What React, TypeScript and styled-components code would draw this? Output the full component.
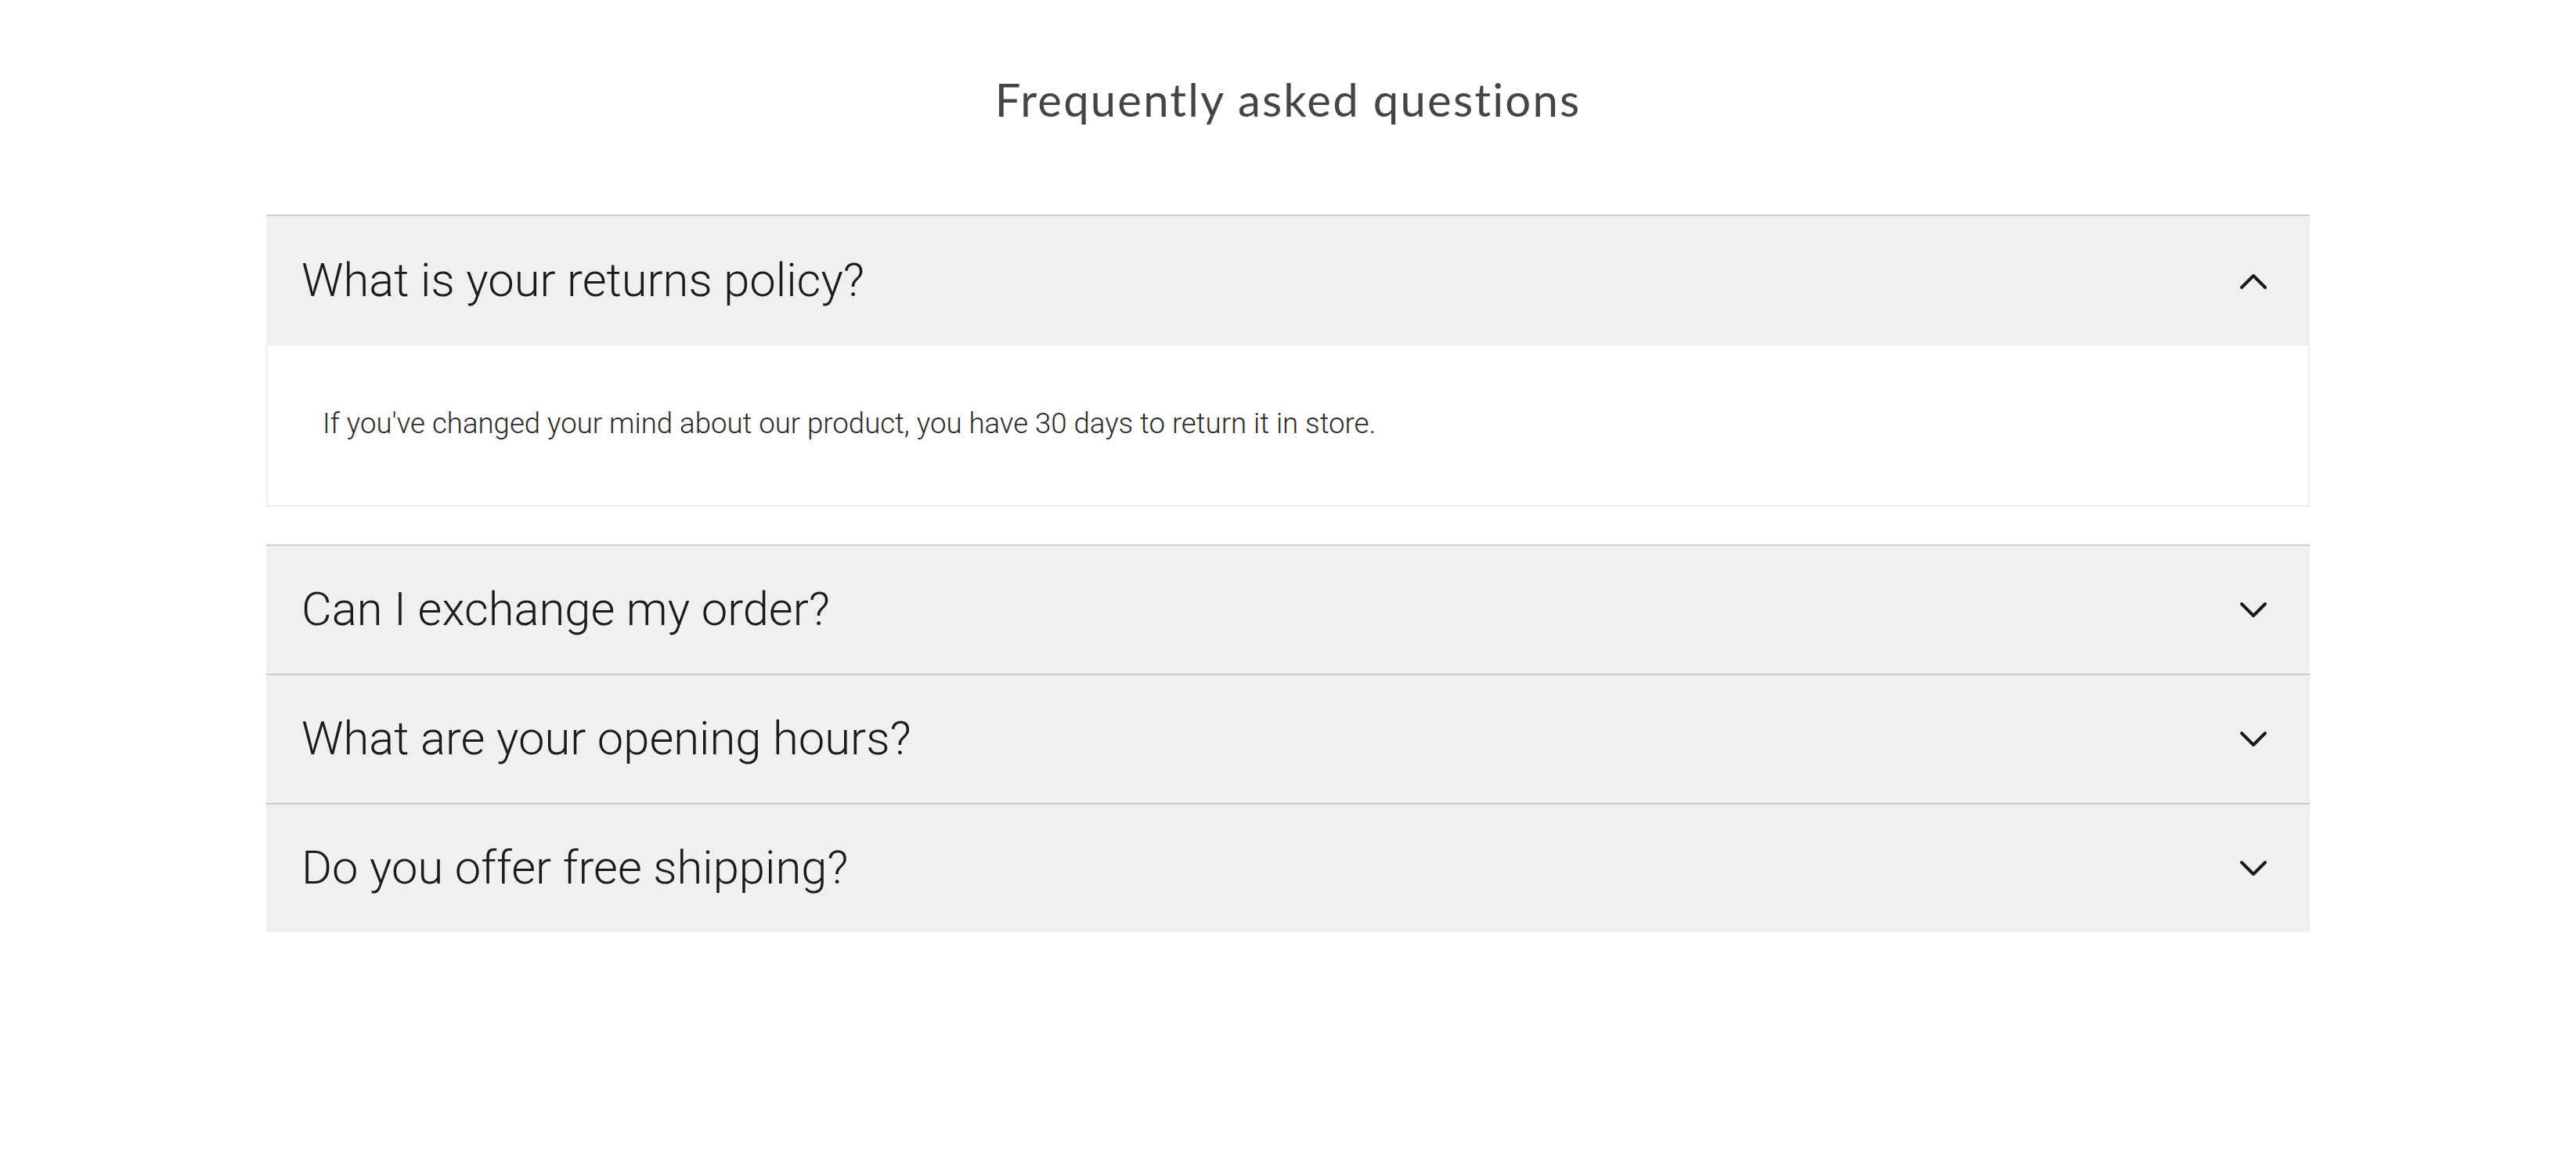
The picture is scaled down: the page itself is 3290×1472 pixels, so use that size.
import React, { useState } from "react";
import styled, { createGlobalStyle } from "styled-components";

const GlobalStyle = createGlobalStyle`
  html, body {
    margin: 0;
    padding: 0;
    background: #ffffff;
  }
  * { box-sizing: border-box; }
`;

const Page = styled.main`
  display: flex;
  flex-direction: column;
  align-items: center;
  padding: 92px 0 120px;
`;

const Title = styled.h1`
  margin: 0 0 112px;
  font-family: Lato, "Open Sans", sans-serif;
  font-weight: 400;
  font-size: 58px;
  line-height: 70px;
  color: #454545;
  text-align: center;
  letter-spacing: 2.2px;
`;

const List = styled.div`
  width: 2610px;
  display: flex;
  flex-direction: column;
`;

const Item = styled.section<{ $open: boolean }>`
  display: flex;
  flex-direction: column;
  margin-bottom: ${(p) => (p.$open ? "48px" : "0")};
`;

const Header = styled.button<{ $first: boolean }>`
  display: flex;
  align-items: center;
  justify-content: space-between;
  width: 100%;
  height: ${(p) => (p.$first ? "167px" : "165px")};
  padding: 0 54px 0 45px;
  margin: 0;
  border: none;
  border-top: 2px solid #cccccc;
  background: #f0f0f0;
  cursor: pointer;
  text-align: left;
`;

const Question = styled.span`
  font-family: Roboto, "Liberation Sans", sans-serif;
  font-weight: 300;
  font-size: 59.7px;
  line-height: 1;
  color: #1b1b1b;
`;

const IconBox = styled.span`
  display: flex;
  align-items: center;
  justify-content: center;
  width: 36px;
  height: 22px;
  color: #1a1a1a;
`;

const Panel = styled.div`
  display: flex;
  align-items: center;
  height: 206px;
  padding: 0 70px;
  border: 2px solid #eeeeee;
  border-top: none;
  background: #ffffff;
`;

const Answer = styled.p`
  margin: 0 0 4px;
  font-family: Roboto, "Liberation Sans", sans-serif;
  font-weight: 300;
  font-size: 36.6px;
  line-height: 1.2;
  color: #2a2a2a;
`;

const Chevron = ({ up }: { up: boolean }) => (
  <svg width="36" height="22" viewBox="0 0 36 22" fill="none" aria-hidden="true">
    <polyline
      points={up ? "3,19 18,4 33,19" : "3,3 18,18 33,3"}
      stroke="currentColor"
      strokeWidth="4"
      strokeLinecap="round"
      strokeLinejoin="round"
    />
  </svg>
);

const faqs = [
  {
    q: "What is your returns policy?",
    a: "If you've changed your mind about our product, you have 30 days to return it in store.",
  },
  {
    q: "Can I exchange my order?",
    a: "Yes, you can exchange your order within 30 days of purchase.",
  },
  {
    q: "What are your opening hours?",
    a: "We are open Monday to Saturday, 9am to 6pm.",
  },
  {
    q: "Do you offer free shipping?",
    a: "We offer free shipping on all orders over $50.",
  },
];

export default function App() {
  const [open, setOpen] = useState<number | null>(0);
  return (
    <>
      <GlobalStyle />
      <Page>
        <Title>Frequently asked questions</Title>
        <List>
          {faqs.map((f, i) => {
            const isOpen = open === i;
            return (
              <Item key={f.q} $open={isOpen}>
                <Header $first={i === 0} onClick={() => setOpen(isOpen ? null : i)}>
                  <Question>{f.q}</Question>
                  <IconBox>
                    <Chevron up={isOpen} />
                  </IconBox>
                </Header>
                {isOpen && (
                  <Panel>
                    <Answer>{f.a}</Answer>
                  </Panel>
                )}
              </Item>
            );
          })}
        </List>
      </Page>
    </>
  );
}
